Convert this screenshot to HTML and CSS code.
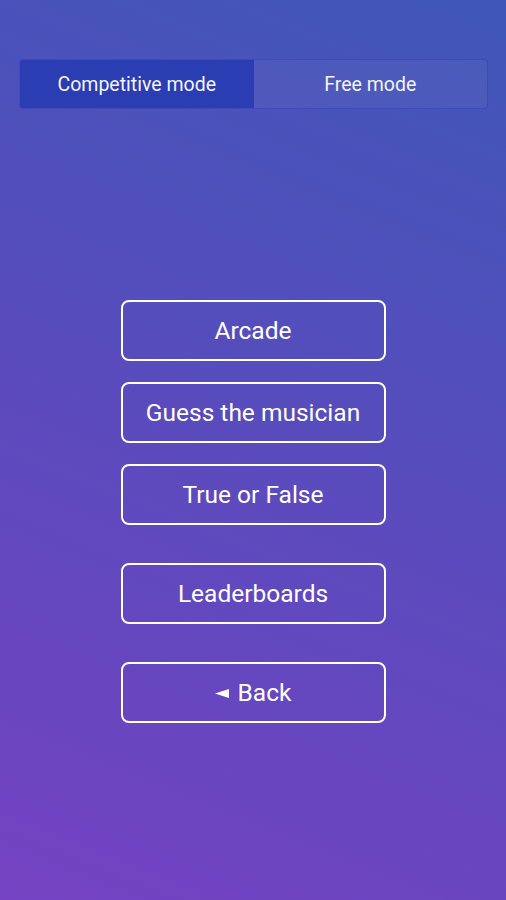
FILE: index.html
```html
<!DOCTYPE html>
<html>
<head>
<meta charset="utf-8">
<link rel="stylesheet" href="styles.css">
</head>
<body>
<div class="screen">
  <div class="tabs">
    <div class="tab active">Competitive mode</div>
    <div class="tab">Free mode</div>
  </div>
  <div class="menu">
    <div class="group">
      <button class="btn">Arcade</button>
      <button class="btn">Guess the musician</button>
      <button class="btn">True or False</button>
    </div>
    <button class="btn">Leaderboards</button>
    <button class="btn"><svg class="arrow" width="14" height="9" viewBox="0 0 14 9"><polygon points="0,4.5 14,0 14,9" fill="#fff"/></svg>Back</button>
  </div>
</div>
</body>
</html>
```
FILE: styles.css
```css
html, body {
  margin: 0;
  padding: 0;
}
body {
  width: 506px;
  height: 900px;
  overflow: hidden;
  font-family: Roboto, "Liberation Sans", sans-serif;
  color: #fff;
}
.screen {
  height: 900px;
  box-sizing: border-box;
  padding: 60px 19px 0 20px;
  background: linear-gradient(202deg, #3f57b8 0%, #5a4bbd 50%, #7442c2 100%);
}
.tabs {
  display: flex;
  height: 48px;
  border-radius: 3px;
  background: rgba(255,255,255,0.04);
  box-shadow: 0 0 0 1px rgba(40,50,170,0.25);
  overflow: hidden;
}
.tab {
  flex: 1;
  display: flex;
  align-items: center;
  justify-content: center;
  font-size: 19.5px;
  color: #f4f4ff;
}
.tab.active {
  background: #2b3db2;
}
.menu {
  margin-top: 192px;
  margin-left: -1px;
  display: flex;
  flex-direction: column;
  align-items: center;
  gap: 38px;
}
.group {
  display: flex;
  flex-direction: column;
  gap: 21px;
}
.btn {
  width: 265px;
  height: 61px;
  box-sizing: border-box;
  border: 2px solid #fff;
  border-radius: 8px;
  background: transparent;
  color: #fff;
  font-family: Roboto, "Liberation Sans", sans-serif;
  font-size: 24.5px;
  display: flex;
  align-items: center;
  justify-content: center;
  padding: 0;
}
.arrow {
  margin-right: 9px;
  margin-top: 1px;
}
```
